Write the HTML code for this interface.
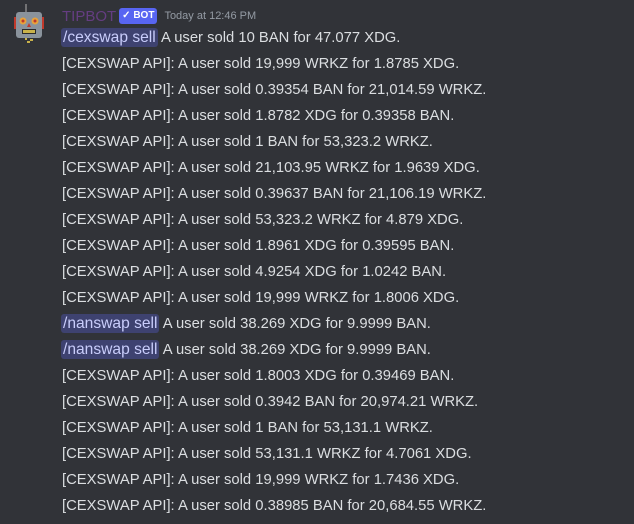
<!DOCTYPE html>
<html><head><meta charset="utf-8"><style>
html,body{margin:0;padding:0;background:#313338;width:634px;height:524px;overflow:hidden;font-family:"Liberation Sans",sans-serif;}
.hdr{position:absolute;left:62px;top:7px;height:18px;display:flex;align-items:center;white-space:nowrap}
.name{color:#6e3f8e;font-size:15px;opacity:.85}
.bot{background:#5865f2;color:#fff;font-size:10px;font-weight:bold;border-radius:3px;padding:1px 3px;margin-left:3px;height:14px;line-height:14px}
.ts{color:#949ba4;font-size:11px;margin-left:7px}
.l{position:absolute;left:62px;color:#dbdee1;font-size:14.8px;white-space:nowrap;line-height:20px}
.cmd{background:#3e4270;color:#c9cdfb;border-radius:3px;padding:1px 2px;margin-left:-1px;font-size:15.6px}
</style></head><body>
<svg style="position:absolute;left:8px;top:4px" width="36" height="40" viewBox="0 0 36 40">
<line x1="18" y1="0" x2="18" y2="8" stroke="#888" stroke-width="1.5"/>
<rect x="6" y="13" width="3" height="12" fill="#c0392b"/><rect x="33" y="13" width="3" height="12" fill="#c0392b"/>
<rect x="8" y="8" width="26" height="26" rx="3" fill="#8a939c"/>
<circle cx="15" cy="17" r="3.5" fill="#e8a23a"/><circle cx="27" cy="17" r="3.5" fill="#e8a23a"/>
<circle cx="15" cy="17" r="1.5" fill="#c0392b"/><circle cx="27" cy="17" r="1.5" fill="#c0392b"/>
<polygon points="21,19 19,23 23,23" fill="#c0392b"/>
<rect x="14" y="25" width="14" height="5" fill="#2a2a2a"/><rect x="15" y="26" width="12" height="3" fill="#c9b24a"/>
<rect x="17" y="34" width="2" height="2" fill="#c9b24a"/><rect x="22" y="35" width="3" height="2" fill="#c9b24a"/><rect x="19" y="37" width="3" height="2" fill="#c9b24a"/>
</svg>
<div class="hdr"><span class="name">TIPBOT</span><span class="bot">✓ BOT</span><span class="ts">Today at 12:46 PM</span></div>
<div class="l" style="top:28px"><span class="cmd">/cexswap sell</span> A user sold 10 BAN for 47.077 XDG.</div>
<div class="l" style="top:54px">[CEXSWAP API]: A user sold 19,999 WRKZ for 1.8785 XDG.</div>
<div class="l" style="top:80px">[CEXSWAP API]: A user sold 0.39354 BAN for 21,014.59 WRKZ.</div>
<div class="l" style="top:106px">[CEXSWAP API]: A user sold 1.8782 XDG for 0.39358 BAN.</div>
<div class="l" style="top:132px">[CEXSWAP API]: A user sold 1 BAN for 53,323.2 WRKZ.</div>
<div class="l" style="top:158px">[CEXSWAP API]: A user sold 21,103.95 WRKZ for 1.9639 XDG.</div>
<div class="l" style="top:184px">[CEXSWAP API]: A user sold 0.39637 BAN for 21,106.19 WRKZ.</div>
<div class="l" style="top:210px">[CEXSWAP API]: A user sold 53,323.2 WRKZ for 4.879 XDG.</div>
<div class="l" style="top:236px">[CEXSWAP API]: A user sold 1.8961 XDG for 0.39595 BAN.</div>
<div class="l" style="top:262px">[CEXSWAP API]: A user sold 4.9254 XDG for 1.0242 BAN.</div>
<div class="l" style="top:288px">[CEXSWAP API]: A user sold 19,999 WRKZ for 1.8006 XDG.</div>
<div class="l" style="top:314px"><span class="cmd">/nanswap sell</span> A user sold 38.269 XDG for 9.9999 BAN.</div>
<div class="l" style="top:340px"><span class="cmd">/nanswap sell</span> A user sold 38.269 XDG for 9.9999 BAN.</div>
<div class="l" style="top:366px">[CEXSWAP API]: A user sold 1.8003 XDG for 0.39469 BAN.</div>
<div class="l" style="top:392px">[CEXSWAP API]: A user sold 0.3942 BAN for 20,974.21 WRKZ.</div>
<div class="l" style="top:418px">[CEXSWAP API]: A user sold 1 BAN for 53,131.1 WRKZ.</div>
<div class="l" style="top:444px">[CEXSWAP API]: A user sold 53,131.1 WRKZ for 4.7061 XDG.</div>
<div class="l" style="top:470px">[CEXSWAP API]: A user sold 19,999 WRKZ for 1.7436 XDG.</div>
<div class="l" style="top:496px">[CEXSWAP API]: A user sold 0.38985 BAN for 20,684.55 WRKZ.</div>
</body></html>
